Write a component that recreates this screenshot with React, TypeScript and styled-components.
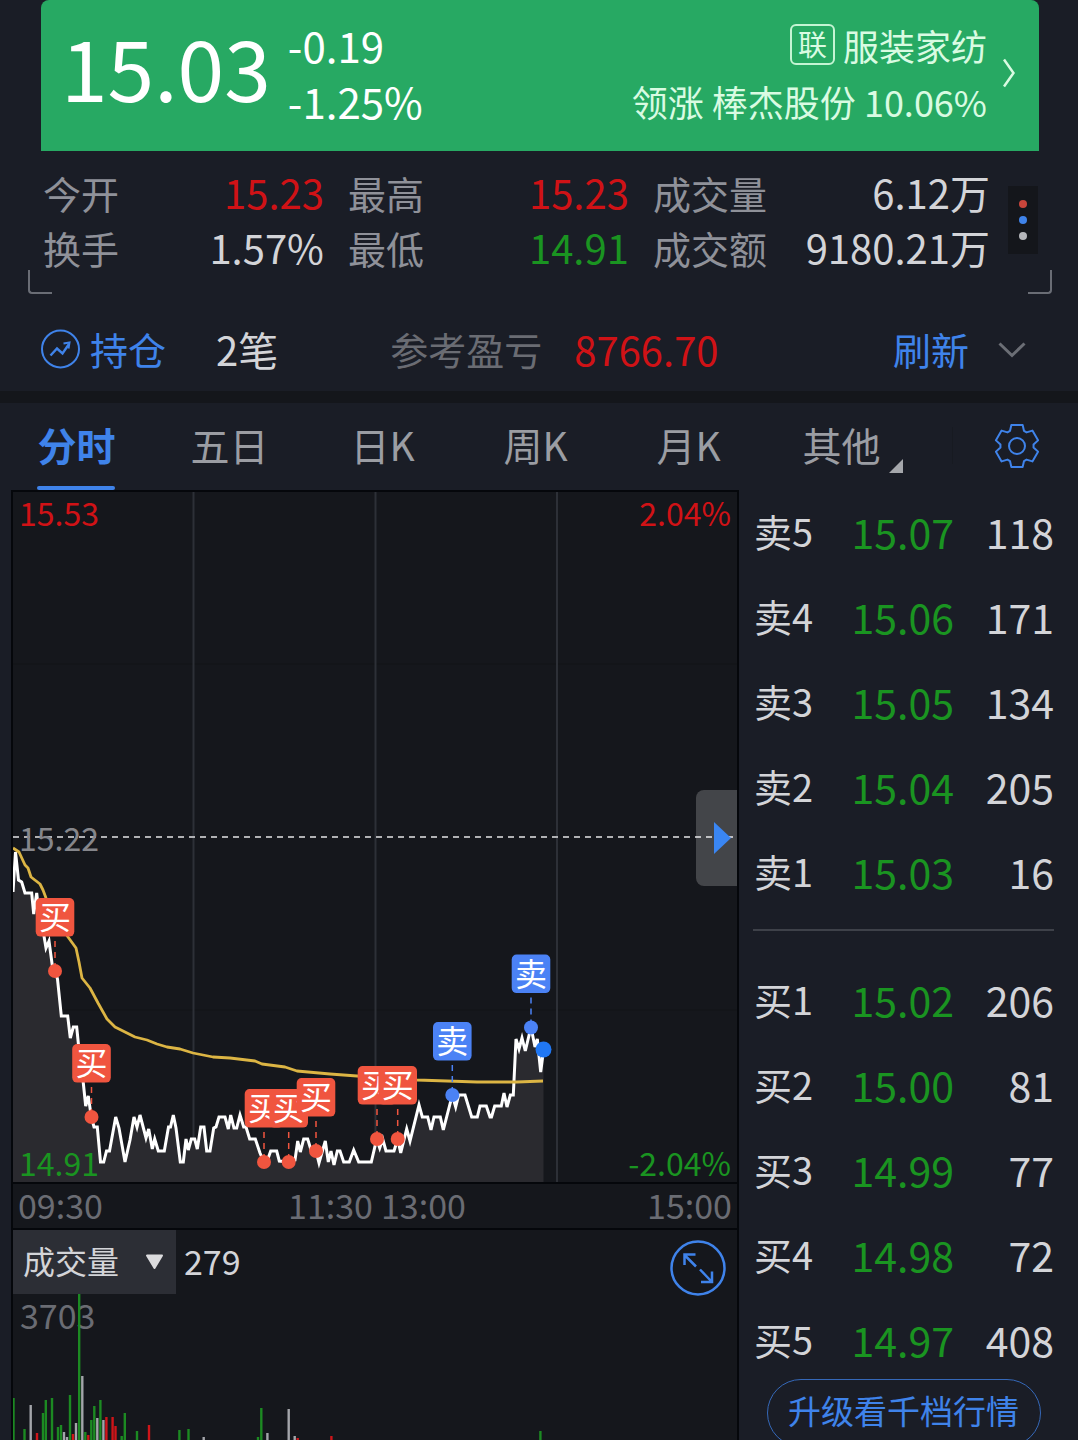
import React from "react";
import styled, { createGlobalStyle } from "styled-components";

const color = {
  page: "#1a1d26",
  plot: "#15171c",
  line: "#05070b",
  red: "#d01216",
  green: "#1a9421",
  blue: "#3f83ea",
  text: "#d3d4d8",
  label: "#8f9199",
  dim: "#6a6c73",
};

const GlobalStyle = createGlobalStyle`
  * { box-sizing: border-box; }
  body {
    margin: 0;
    background: ${color.page};
    font-family: "Noto Sans CJK SC", "Noto Sans", sans-serif;
    color: ${color.text};
  }
  button, select {
    font: inherit;
    color: inherit;
    background: none;
    border: 0;
    padding: 0;
    margin: 0;
    cursor: pointer;
  }
  h1, p, dl, dd, dt { margin: 0; font-weight: 400; }
  svg { display: block; }
`;

const Screen = styled.main`
  height: 100vh;
  display: flex;
  flex-direction: column;
  overflow: hidden;
  white-space: nowrap;
`;

/* ---------- quote banner ---------- */

const Banner = styled.header`
  display: flex;
  align-items: center;
  height: 151px;
  flex: none;
  margin: 0 39px 0 41px;
  padding: 0 24px 6px 20px;
  border-radius: 8px 8px 0 0;
  background: #27a963;
  color: #fff;
`;

const LastPrice = styled.h1`
  padding-bottom: 14px;
  font-size: 84px;
  line-height: 120px;
`;

const Changes = styled.div`
  display: flex;
  flex-direction: column;
  margin-left: 17px;
  font-size: 42px;
  line-height: 56px;
`;

const Sector = styled.button`
  display: flex;
  align-items: center;
  gap: 16px;
  margin-left: auto;
  color: #d9fbe2;
`;

const SectorLines = styled.span`
  display: flex;
  flex-direction: column;
  align-items: flex-end;
  font-size: 36px;
  line-height: 56px;
`;

const SectorName = styled.span`
  display: flex;
  align-items: center;
  gap: 8px;
`;

const LinkBadge = styled.span`
  width: 45px;
  height: 41px;
  border: 2px solid #c4f4d3;
  border-radius: 6px;
  font-size: 29px;
  line-height: 34px;
  text-align: center;
`;

/* ---------- key figures ---------- */

const Figures = styled.section`
  position: relative;
  display: flex;
  flex: none;
  align-items: flex-start;
  height: 143px;
  margin: 0 26px 0 28px;
  padding: 14px 14px 0 15px;
`;

const FigureGrid = styled.dl`
  flex: 1;
  display: grid;
  grid-template-columns: 5fr 5fr 6fr;
  column-gap: 24px;
`;

const Figure = styled.div`
  display: flex;
  justify-content: space-between;
  font-size: 38px;
  line-height: 55px;
`;

const FigureLabel = styled.dt`
  color: ${color.label};
`;

const FigureValue = styled.dd<{ $tone?: string }>`
  font-size: 40px;
  color: ${(p) => p.$tone ?? color.text};
`;

const MoreButton = styled.button`
  display: flex;
  flex-direction: column;
  align-items: center;
  justify-content: center;
  gap: 8px;
  width: 30px;
  height: 68px;
  margin: 21px 0 0 18px;
  background: #14161b;
`;

const Dot = styled.span<{ $tone: string }>`
  width: 8px;
  height: 8px;
  border-radius: 50%;
  background: ${(p) => p.$tone};
`;

const Corner = styled.span<{ $side: "left" | "right" }>`
  position: absolute;
  bottom: 0;
  ${(p) => p.$side}: 0;
  width: 24px;
  height: 24px;
  border: solid #6a6d75;
  border-width: 0 0 2px 0;
  border-${(p) => p.$side}-width: 2px;
  border-bottom-${(p) => p.$side}-radius: 4px;
`;

/* ---------- holdings ---------- */

const Holdings = styled.section`
  display: flex;
  align-items: center;
  flex: none;
  height: 97px;
  padding: 12px 52px 0 41px;
  font-size: 38px;
  line-height: 56px;
`;

const HoldingTitle = styled.span`
  display: flex;
  align-items: center;
  gap: 10px;
  color: ${color.blue};
`;

const HoldingCount = styled.span`
  margin-left: 50px;
  font-size: 40px;
`;

const ProfitLabel = styled.span`
  margin-left: 112px;
  color: ${color.dim};
`;

const ProfitValue = styled.span`
  margin-left: 32px;
  font-size: 40px;
  color: ${color.red};
`;

const RefreshButton = styled.button`
  margin-left: auto;
  color: ${color.blue};
`;

const CollapseButton = styled.button`
  margin-left: 29px;
  padding-top: 3px;
`;

const Band = styled.div`
  flex: none;
  height: 12px;
  background: #14161b;
`;

/* ---------- tabs ---------- */

const TabBar = styled.nav`
  display: flex;
  flex: none;
  height: 87px;
`;

const Tabs = styled.div`
  flex: 1;
  display: grid;
  grid-template-columns: repeat(6, 1fr);
`;

const Tab = styled.button<{ $active?: boolean }>`
  position: relative;
  padding-bottom: 6px;
  font-size: 39px;
  line-height: 56px;
  font-weight: ${(p) => (p.$active ? 700 : 400)};
  color: ${(p) => (p.$active ? color.blue : "#9b9da3")};

  &::after {
    content: "";
    display: ${(p) => (p.$active ? "block" : "none")};
    position: absolute;
    bottom: 0;
    left: 50%;
    width: 78px;
    height: 4px;
    margin-left: -40px;
    border-radius: 2px;
    background: ${color.blue};
  }
`;

const TabCorner = styled.span`
  position: absolute;
  right: 15px;
  bottom: 17px;
  border: 7px solid;
  border-color: transparent #a5a7ab #a5a7ab transparent;
`;

const SettingsButton = styled.button`
  display: flex;
  align-items: center;
  justify-content: center;
  width: 126px;
  margin: 24px 0 26px 34px;
  border-left: 1px solid #171a21;
  padding-left: 3px;
`;

/* ---------- body ---------- */

const Body = styled.div`
  flex: 1;
  min-height: 0;
  display: grid;
  grid-template-columns: minmax(0, 1fr) 339px;
`;

const ChartColumn = styled.section`
  display: flex;
  flex-direction: column;
  margin-left: 11px;
  border: solid ${color.line};
  border-width: 2px 2px 0;
  background: ${color.plot};
`;

const Plot = styled.div`
  position: relative;
`;

const Scale = styled.div<{ $side: "left" | "right" }>`
  position: absolute;
  top: 0;
  bottom: 0;
  ${(p) => p.$side}: 6px;
  display: flex;
  flex-direction: column;
  justify-content: space-between;
  font-size: 32px;
  line-height: 40px;
  text-align: ${(p) => p.$side};
`;

const ScaleText = styled.span<{ $tone: string }>`
  color: ${(p) => p.$tone};
`;

const Handle = styled.button`
  position: absolute;
  top: 50%;
  right: 0;
  display: flex;
  align-items: center;
  justify-content: flex-end;
  width: 41px;
  height: 96px;
  margin-top: -47px;
  padding-right: 6px;
  border-radius: 8px 0 0 8px;
  background: rgba(255, 255, 255, 0.2);
`;

const TimeAxis = styled.div`
  display: grid;
  grid-template-columns: 1fr auto 1fr;
  border: solid ${color.line};
  border-width: 2px 0;
  padding: 0 5px 2px;
  font-size: 34px;
  line-height: 42px;
  color: ${color.dim};
`;

const MidTimes = styled.span`
  display: flex;
  gap: 8px;
  padding-left: 4px;
`;

const EndTime = styled.span`
  text-align: right;
`;

const VolumeHead = styled.div`
  display: flex;
  align-items: center;
  height: 64px;
  padding-right: 11px;
`;

const IndicatorPicker = styled.label`
  position: relative;
  display: flex;
  align-items: center;
  align-self: stretch;
  width: 163px;
  background: #2c2e35;
`;

const IndicatorSelect = styled.select`
  appearance: none;
  width: 100%;
  height: 100%;
  padding: 0 0 4px 10px;
  font-size: 32px;
  color: ${color.text};
  outline: 0;
`;

const PickerArrow = styled.svg`
  position: absolute;
  right: 12px;
  pointer-events: none;
`;

const VolumeNow = styled.span`
  margin-left: 8px;
  padding-bottom: 2px;
  font-size: 34px;
  line-height: 42px;
`;

const ExpandButton = styled.button`
  margin: 12px 0 0 auto;
`;

const VolumePlot = styled.div`
  position: relative;
`;

const VolumeMax = styled.span`
  position: absolute;
  top: 0;
  left: 7px;
  font-size: 34px;
  line-height: 42px;
  color: ${color.dim};
`;

const VolumeSvg = styled.svg`
  position: relative;
`;

/* ---------- order book ---------- */

const Book = styled.aside`
  padding: 13px 24px 0 14px;
`;

const Levels = styled.table`
  width: 100%;
  border-collapse: collapse;
  line-height: 56px;

  th, td {
    padding: 0 0 29px;
    text-align: right;
    font-size: 41px;
    font-weight: 400;
  }
  th {
    padding-left: 1px;
    text-align: left;
    font-size: 38px;
  }
  td:nth-child(2) { color: ${color.green}; }
  td:last-child { width: 100px; }
  tr:last-child > * { padding-bottom: 0; }
`;

const Divider = styled.hr`
  height: 2px;
  margin: 30px 0 40px;
  border: 0;
  background: #3e4149;
`;

const UpgradeButton = styled.button`
  display: block;
  width: 274px;
  height: 68px;
  margin: 12px auto 0;
  padding-bottom: 6px;
  border: 1px solid #3568b8;
  border-radius: 34px;
  font-size: 33px;
  line-height: 56px;
  color: ${color.blue};
`;

/* ---------- data ---------- */

const figures = [
  { label: "今开", value: "15.23", tone: color.red },
  { label: "最高", value: "15.23", tone: color.red },
  { label: "成交量", value: "6.12万" },
  { label: "换手", value: "1.57%" },
  { label: "最低", value: "14.91", tone: color.green },
  { label: "成交额", value: "9180.21万" },
];

const sells = [
  ["卖5", "15.07", "118"],
  ["卖4", "15.06", "171"],
  ["卖3", "15.05", "134"],
  ["卖2", "15.04", "205"],
  ["卖1", "15.03", "16"],
];

const buys = [
  ["买1", "15.02", "206"],
  ["买2", "15.00", "81"],
  ["买3", "14.99", "77"],
  ["买4", "14.98", "72"],
  ["买5", "14.97", "408"],
];

const priceLine =
  "13,892 15.5,852 18.5,880 21.7,882 25,893 31.7,893 33.7,914 36.7,893 39,915 43.5,933 46,948 49,941 52.5,967 55,971 57.5,979 61.3,1016 67.7,1016 70.3,1038 73.3,1027 76.7,1027 80,1060 83.3,1083 85.7,1106 88.3,1096 91.3,1117 94,1127 97.3,1127 100.5,1162 103.7,1162 106.5,1151 109.5,1151 115.7,1117 119,1128 125,1162 130,1140 134,1117 137,1127 140,1115 146,1138 148.7,1129 152.3,1149 154.7,1139 158.3,1151 164.3,1151 168.5,1127 170.5,1127 173.3,1115 176,1128 180.3,1162 183.3,1162 186,1139 188.3,1150 191.3,1139 194.7,1139 197.3,1149 200.7,1127 204,1127 206.7,1151 210,1151 213.7,1128 216,1127 219,1117 225,1117 228.3,1129 230.7,1115 234,1128 236.7,1128 240,1115 243.7,1127 246,1127 249.7,1139 255.3,1139 260,1153 264,1162 267.5,1160 270.7,1151 276.7,1151 279.3,1161 288.7,1162 295,1160 297.7,1141 300.3,1152 303.7,1139 307.7,1139 311,1150 316,1151 319,1163 325.3,1141 328.3,1162 331,1151 334,1165 337.3,1151 340,1151 343.7,1162 349.3,1162 353.7,1150 358.7,1162 371.3,1162 376.7,1139 379.7,1148 382.7,1139 386,1151 394,1151 397.7,1139 400.7,1153 406.7,1129 410,1141 419,1105 422.3,1117 427.7,1117 431,1130 434,1117 440.3,1117 443.3,1130 452.3,1095 455.7,1107 458.7,1095 465,1095 471.7,1117 477.3,1117 480,1106 486.3,1106 490,1117 491.5,1117 494.7,1106 501.3,1106 504,1093 507,1107 510.3,1095 513.3,1095 516,1039 519,1049 522,1038 525.3,1051 531,1027 535,1047 537.3,1039 540.7,1072 543.5,1050";

const averageLine =
  "13,848 19,852 25,865 28,868 31,877 40,884 43,890 46,898 57,921 68,937 76,948 79,962 82,978 90,988 98,1003 107,1019 115,1027 125,1032 135,1037 147,1040 157,1044 167,1047 180,1049 193,1053 213,1057 230,1058 255,1061 262,1064 285,1067 297,1071 330,1074 357,1076 417,1080 477,1082 517,1082 543,1081";

const trades = [
  { kind: "买", x: 55, y: 971 },
  { kind: "买", x: 91.5, y: 1117 },
  { kind: "买", x: 264, y: 1162 },
  { kind: "买", x: 288.7, y: 1162 },
  { kind: "买", x: 316, y: 1151 },
  { kind: "买", x: 377, y: 1139 },
  { kind: "买", x: 397.7, y: 1139 },
  { kind: "卖", x: 452.3, y: 1095 },
  { kind: "卖", x: 531, y: 1027.5 },
];

const barTone: Record<string, string> = { g: "#1c8a22", r: "#cf1519", w: "#a3a5aa" };

const bars: [number, number, string][] = [
  [13.5, 1398, "g"], [24.5, 1429, "g"], [30.7, 1405, "w"], [37, 1433, "r"],
  [43, 1413, "g"], [45.8, 1400, "g"], [52, 1398, "g"], [58, 1427, "g"],
  [61, 1425, "g"], [64, 1432, "w"], [67, 1437, "w"], [70, 1395, "g"],
  [73, 1434, "r"], [76, 1423, "w"], [79.2, 1294, "g"], [82.3, 1376, "w"],
  [85.3, 1432, "g"], [88.3, 1435, "r"], [91.3, 1420, "g"], [94.3, 1406, "g"],
  [97.3, 1418, "w"], [100.4, 1400, "g"], [103.4, 1420, "w"], [106.4, 1417, "r"],
  [112.6, 1417, "r"], [115.5, 1426, "r"], [121.7, 1436, "g"], [124.8, 1413, "g"],
  [137, 1431, "g"], [149, 1425, "r"], [179.4, 1430, "g"], [188.5, 1429, "g"],
  [203.7, 1437, "w"], [258, 1437, "g"], [261.3, 1408, "g"], [267.4, 1433, "w"],
  [288.7, 1409, "w"], [294.7, 1436, "w"], [297.7, 1438, "r"], [331.4, 1436, "r"],
  [540.4, 1431, "g"],
];

/* Six-toothed cog outline around the origin. */
const gearPath = (() => {
  const at = (deg: number, r: number) => {
    const a = (deg * Math.PI) / 180;
    return `${(r * Math.cos(a)).toFixed(2)} ${(r * Math.sin(a)).toFixed(2)}`;
  };
  const pts: string[] = [];
  for (let k = 0; k < 6; k++) {
    const a = -90 + 60 * k;
    pts.push(at(a - 25, 16.6), at(a - 15, 21.8), at(a + 15, 21.8), at(a + 25, 16.6));
  }
  return `M${pts.join("L")}Z`;
})();

/* ---------- pieces ---------- */

function LevelTable({ rows, name }: { rows: string[][]; name: string }) {
  return (
    <Levels aria-label={name}>
      <tbody>
        {rows.map(([label, price, size]) => (
          <tr key={label}>
            <th scope="row">{label}</th>
            <td>{price}</td>
            <td>{size}</td>
          </tr>
        ))}
      </tbody>
    </Levels>
  );
}

function PriceChart() {
  return (
    <svg viewBox="13 492 724 690" width="100%" role="img" aria-label="分时">
      <path d="M13 664H737M13 1010H737" stroke="#131519" strokeWidth="2" />
      <path d="M193.500 492V1182M375.500 492V1182M557 492V1182" stroke="#2d3037" strokeWidth="2" />
      <polygon points={`13,1182 ${priceLine} 543.5,1182`} fill="#2a2a2f" />
      <path d="M13 837H733" stroke="#b0b1b4" strokeWidth="2" strokeDasharray="6 5" />
      <polyline points={priceLine} fill="none" stroke="#fff" strokeWidth="3" strokeLinejoin="miter" />
      <polyline points={averageLine} fill="none" stroke="#dcb544" strokeWidth="2.800" strokeLinejoin="round" />
      {trades.map((t) => {
        const fill = t.kind === "买" ? "#f0553f" : "#4b82f5";
        return (
          <g key={`${t.x}`}>
            <path d={`M${t.x} ${t.y - 30}V${t.y - 6}`} stroke={fill} strokeWidth="1.500" strokeDasharray="6 5" />
            <circle cx={t.x} cy={t.y} r="7" fill={fill} />
            <rect x={t.x - 19.3} y={t.y - 73} width="38.600" height="38.600" rx="5" fill={fill} />
            <text x={t.x} y={t.y - 42} fontSize="32" textAnchor="middle" fill="#fff">
              {t.kind}
            </text>
          </g>
        );
      })}
      <circle cx="543.500" cy="1049.500" r="8" fill="#2077f3" />
    </svg>
  );
}

export default function App() {
  return (
    <>
      <GlobalStyle />
      <Screen>
        <Banner>
          <LastPrice>15.03</LastPrice>
          <Changes>
            <span>-0.19</span>
            <span>-1.25%</span>
          </Changes>
          <Sector>
            <SectorLines>
              <SectorName>
                <LinkBadge>联</LinkBadge>
                服装家纺
              </SectorName>
              <span>领涨 棒杰股份 10.06%</span>
            </SectorLines>
            <svg width="12" height="30" viewBox="0 0 12 30" fill="none" stroke="currentColor" strokeWidth="2.500">
              <path d="M1 1.500L10.500 15L1 28.500" />
            </svg>
          </Sector>
        </Banner>

        <Figures>
          <FigureGrid>
            {figures.map((f) => (
              <Figure key={f.label}>
                <FigureLabel>{f.label}</FigureLabel>
                <FigureValue $tone={f.tone}>{f.value}</FigureValue>
              </Figure>
            ))}
          </FigureGrid>
          <MoreButton aria-label="更多">
            <Dot $tone="#c9453b" />
            <Dot $tone="#3f83ea" />
            <Dot $tone="#b4b6ba" />
          </MoreButton>
          <Corner $side="left" />
          <Corner $side="right" />
        </Figures>

        <Holdings>
          <HoldingTitle>
            <svg width="39" height="40" viewBox="0 0 39 40" fill="none" stroke="currentColor" strokeWidth="2">
              <circle cx="19.500" cy="20" r="18.500" />
              <path d="M9.500 26.500L16 19.500L21.500 24.500L28 15" strokeWidth="2.400" />
              <path d="M22.500 14.500L28.500 13.500L27.500 19.500" />
            </svg>
            持仓
          </HoldingTitle>
          <HoldingCount>2笔</HoldingCount>
          <ProfitLabel>参考盈亏</ProfitLabel>
          <ProfitValue>8766.70</ProfitValue>
          <RefreshButton>刷新</RefreshButton>
          <CollapseButton aria-label="展开">
            <svg width="28" height="16" viewBox="0 0 28 16" fill="none" stroke="#6b6e75" strokeWidth="3">
              <path d="M1.500 1.500L14 13.500L26.500 1.500" />
            </svg>
          </CollapseButton>
        </Holdings>

        <Band />

        <TabBar>
          <Tabs>
            <Tab $active>分时</Tab>
            <Tab>五日</Tab>
            <Tab>日K</Tab>
            <Tab>周K</Tab>
            <Tab>月K</Tab>
            <Tab>
              其他
              <TabCorner />
            </Tab>
          </Tabs>
          <SettingsButton aria-label="设置">
            <svg width="46" height="46" viewBox="-23 -23 46 46" fill="none" stroke={color.blue} strokeWidth="2" strokeLinejoin="round">
              <path d={gearPath} />
              <circle r="8" />
            </svg>
          </SettingsButton>
        </TabBar>

        <Body>
          <ChartColumn>
            <Plot>
              <PriceChart />
              <Scale $side="left">
                <ScaleText $tone={color.red}>15.53</ScaleText>
                <ScaleText $tone="#85868b">15.22</ScaleText>
                <ScaleText $tone={color.green}>14.91</ScaleText>
              </Scale>
              <Scale $side="right">
                <ScaleText $tone={color.red}>2.04%</ScaleText>
                <ScaleText $tone={color.green}>-2.04%</ScaleText>
              </Scale>
              <Handle aria-label="收起盘口">
                <svg width="17" height="32" viewBox="0 0 17 32">
                  <path d="M0 0L17 16L0 32Z" fill="#3a86f3" />
                </svg>
              </Handle>
            </Plot>
            <TimeAxis>
              <span>09:30</span>
              <MidTimes>
                <span>11:30</span>
                <span>13:00</span>
              </MidTimes>
              <EndTime>15:00</EndTime>
            </TimeAxis>
            <VolumeHead>
              <IndicatorPicker>
                <IndicatorSelect aria-label="指标" defaultValue="成交量">
                  <option>成交量</option>
                </IndicatorSelect>
                <PickerArrow width="19" height="16" viewBox="0 0 19 16">
                  <path d="M2 1.500H17L9.500 14Z" fill="#dcdcde" stroke="#dcdcde" strokeWidth="2" strokeLinejoin="round" />
                </PickerArrow>
              </IndicatorPicker>
              <VolumeNow>279</VolumeNow>
              <ExpandButton aria-label="全屏">
                <svg width="56" height="56" viewBox="0 0 56 56" fill="none" stroke={color.blue} strokeWidth="2.500">
                  <circle cx="28" cy="28" r="26.500" />
                  <path d="M26 26.500L14.500 15M14.500 25V14.500H25.500M30 29.500L41.500 41.500M42 31.500V42H31" />
                </svg>
              </ExpandButton>
            </VolumeHead>
            <VolumePlot>
              <VolumeMax>3703</VolumeMax>
              <VolumeSvg viewBox="13 1294 724 146" width="100%" role="img" aria-label="成交量">
                {bars.map(([x, y, tone]) => (
                  <path key={x} d={`M${x} ${y}V1440`} stroke={barTone[tone]} strokeWidth="2.400" />
                ))}
              </VolumeSvg>
            </VolumePlot>
          </ChartColumn>

          <Book>
            <LevelTable rows={sells} name="卖盘" />
            <Divider />
            <LevelTable rows={buys} name="买盘" />
            <UpgradeButton>升级看千档行情</UpgradeButton>
          </Book>
        </Body>
      </Screen>
    </>
  );
}
